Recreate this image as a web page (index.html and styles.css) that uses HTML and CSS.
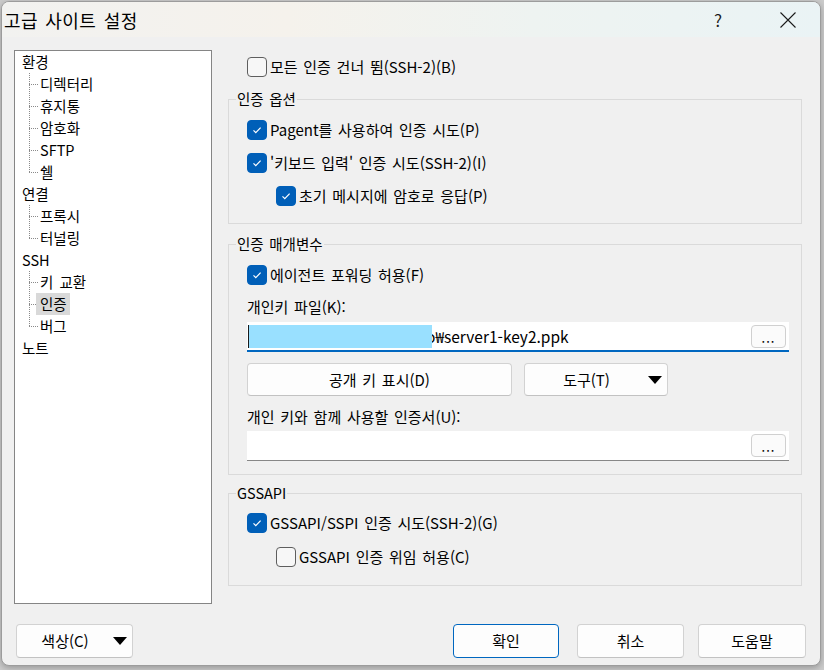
FILE: index.html
```html
<!DOCTYPE html>
<html lang="ko">
<head>
<meta charset="utf-8">
<title>고급 사이트 설정</title>
<link rel="stylesheet" href="styles.css">
</head>
<body>
<div class="window">
  <div class="titlebar">
    <span class="title">고급 사이트 설정</span>
    <span class="help">?</span>
    <span class="close"><svg width="16" height="16" viewBox="0 0 16 16"><path d="M0.5 0.5L15.5 15.5M15.5 0.5L0.5 15.5" stroke="#1b1b1b" stroke-width="1.1" fill="none"/></svg></span>
  </div>
  <div class="main">
    <ul class="tree">
      <li class="node"><span class="node-label">환경</span>
        <ul class="children">
          <li class="child"><span class="label">디렉터리</span></li>
          <li class="child"><span class="label">휴지통</span></li>
          <li class="child"><span class="label">암호화</span></li>
          <li class="child"><span class="label">SFTP</span></li>
          <li class="child"><span class="label">쉘</span></li>
        </ul>
      </li>
      <li class="node"><span class="node-label">연결</span>
        <ul class="children">
          <li class="child"><span class="label">프록시</span></li>
          <li class="child"><span class="label">터널링</span></li>
        </ul>
      </li>
      <li class="node"><span class="node-label">SSH</span>
        <ul class="children">
          <li class="child"><span class="label">키 교환</span></li>
          <li class="child"><span class="label selected">인증</span></li>
          <li class="child"><span class="label">버그</span></li>
        </ul>
      </li>
      <li class="node"><span class="node-label">노트</span></li>
    </ul>

    <div class="panel">
      <label class="check top-check"><span class="box"></span><span>모든 인증 건너 뜀(SSH-2)(B)</span></label>

      <fieldset class="group group-options">
        <legend>인증 옵션</legend>
        <div class="group-body">
          <label class="check"><span class="box on"><svg width="20" height="20" viewBox="0 0 20 20"><polyline points="6.5,10.3 8.8,12.6 13.6,7.6" fill="none" stroke="#fff" stroke-width="1.2"/></svg></span><span>Pagent를 사용하여 인증 시도(P)</span></label>
          <label class="check"><span class="box on"><svg width="20" height="20" viewBox="0 0 20 20"><polyline points="6.5,10.3 8.8,12.6 13.6,7.6" fill="none" stroke="#fff" stroke-width="1.2"/></svg></span><span>'키보드 입력' 인증 시도(SSH-2)(I)</span></label>
          <label class="check indent"><span class="box on"><svg width="20" height="20" viewBox="0 0 20 20"><polyline points="6.5,10.3 8.8,12.6 13.6,7.6" fill="none" stroke="#fff" stroke-width="1.2"/></svg></span><span>초기 메시지에 암호로 응답(P)</span></label>
        </div>
      </fieldset>

      <fieldset class="group group-params">
        <legend>인증 매개변수</legend>
        <div class="group-body">
          <label class="check"><span class="box on"><svg width="20" height="20" viewBox="0 0 20 20"><polyline points="6.5,10.3 8.8,12.6 13.6,7.6" fill="none" stroke="#fff" stroke-width="1.2"/></svg></span><span>에이전트 포워딩 허용(F)</span></label>
          <div class="field-label key-label">개인키 파일(K):</div>
          <div class="input input-focus">
            <span class="sel"></span><span class="input-text">o₩server1-key2.ppk</span>
            <span class="dots">...</span>
          </div>
          <div class="btn-row">
            <div class="btn btn-pub">공개 키 표시(D)</div>
            <div class="btn btn-drop btn-tools"><span class="btn-text">도구(T)</span><svg width="14" height="8" viewBox="0 0 14 8"><polygon points="0,0 14,0 7,8" fill="#000"/></svg></div>
          </div>
          <div class="field-label cert-label">개인 키와 함께 사용할 인증서(U):</div>
          <div class="input input-plain">
            <span class="input-text"></span>
            <span class="dots">...</span>
          </div>
        </div>
      </fieldset>

      <fieldset class="group group-gss">
        <legend>GSSAPI</legend>
        <div class="group-body">
          <label class="check"><span class="box on"><svg width="20" height="20" viewBox="0 0 20 20"><polyline points="6.5,10.3 8.8,12.6 13.6,7.6" fill="none" stroke="#fff" stroke-width="1.2"/></svg></span><span>GSSAPI/SSPI 인증 시도(SSH-2)(G)</span></label>
          <label class="check indent gss-deleg"><span class="box"></span><span>GSSAPI 인증 위임 허용(C)</span></label>
        </div>
      </fieldset>
    </div>
  </div>

  <div class="footer">
    <div class="btn btn-drop btn-color"><span class="btn-text">색상(C)</span><svg width="14" height="8" viewBox="0 0 14 8"><polygon points="0,0 14,0 7,8" fill="#000"/></svg></div>
    <div class="actions">
      <div class="btn btn-ok">확인</div>
      <div class="btn btn-cancel">취소</div>
      <div class="btn btn-helpbtn">도움말</div>
    </div>
  </div>
</div>
</body>
</html>
```
FILE: styles.css
```css
* { box-sizing: border-box; }
html, body { margin: 0; padding: 0; }
body {
  width: 824px;
  height: 670px;
  overflow: hidden;
  background: #cbcbcb;
  font-family: "Noto Sans CJK KR", "Noto Sans", sans-serif;
  font-size: 14px;
  line-height: 20px;
  color: #000;
}

.window {
  margin: 1px 0 0 1px;
  width: 820px;
  height: 665px;
  border: 1px solid #9c9c9c;
  border-radius: 8px;
  background: #f0f0f0;
  overflow: hidden;
  display: flex;
  flex-direction: column;
  box-shadow: 0 2px 6px rgba(0, 0, 0, 0.25);
}

/* title bar */
.titlebar {
  height: 35px;
  flex: none;
  display: flex;
  align-items: center;
  padding-left: 2px;
  background: linear-gradient(90deg, #f2f2f0 0%, #f5f2ec 35%, #eef3f1 65%, #eaf3f5 100%);
}
.title { font-size: 18px; letter-spacing: 0.4px; word-spacing: 2px; }
.help {
  margin-left: auto;
  width: 40px;
  text-align: center;
  font-size: 17px;
  color: #1b1b1b;
}
.close {
  width: 40px;
  margin-left: 30px;
  margin-right: 12px;
  display: flex;
  justify-content: center;
}

/* main area */
.main {
  display: flex;
  padding: 13px 0 0 12px;
}

.tree {
  list-style: none;
  margin: 0;
  padding: 0;
  flex: none;
  width: 198px;
  height: 554px;
  background: #fff;
  border: 1px solid #858585;
  font-size: 14.5px;
  word-spacing: 2px;
}
.node-label {
  display: block;
  height: 22px;
  line-height: 22px;
  padding-left: 7px;
}
.children { list-style: none; margin: 0; padding: 0; }
.child {
  display: flex;
  align-items: center;
  height: 22px;
}
.child::before {
  content: "";
  flex: none;
  width: 10px;
  height: 22px;
  margin-left: 14px;
  background:
    repeating-linear-gradient(to right, #8a8a8a 0 1px, transparent 1px 2px) 0 11px / 10px 1px no-repeat,
    repeating-linear-gradient(to bottom, #8a8a8a 0 1px, transparent 1px 2px) 0 0 / 1px 22px no-repeat;
}
.child:last-child::before {
  background-size: 10px 1px, 1px 11px;
}
.label {
  margin-left: -3px;
  padding: 0 3px 0 4px;
  height: 22px;
  line-height: 22px;
}
.label.selected { background: #d9d9d9; }

/* right panel */
.panel {
  width: 574px;
  margin-left: 16px;
  display: flex;
  flex-direction: column;
  font-size: 15px;
  word-spacing: 1.5px;
}

.check {
  display: flex;
  align-items: center;
  gap: 3px;
  height: 24px;
}
.box {
  flex: none;
  width: 20px;
  height: 20px;
  border: 1px solid #5e5e5e;
  border-radius: 4px;
  background: #f7f7f7;
  display: flex;
}
.box.on {
  border-color: #005fb8;
  background: #005fb8;
}
.box.on svg { margin: -1px; }

.top-check { margin: 5px 0 0 19px; }

.group {
  margin: 10px 0 0 0;
  padding: 0;
  min-width: 0;
  border: 1px solid #dadada;
}
.group legend {
  margin-left: 7px;
  padding: 0 1px;
  line-height: 20px;
  font-size: 14.5px;
}
.group-body {
  display: flex;
  flex-direction: column;
  padding: 9px 12px 15px 18px;
}
.group-options .check + .check { margin-top: 9px; }
.indent { margin-left: 29px; }

.group-params .group-body { padding-bottom: 13px; }
.field-label { height: 20px; line-height: 20px; }
.key-label { margin-top: 10px; }
.cert-label { margin-top: 11px; }

.input {
  display: flex;
  align-items: center;
  height: 30px;
  background: #fff;
  padding-left: 1px;
  padding-right: 3px;
}
.input-focus { margin-top: 5px; border-bottom: 2px solid #0067c0; }
.input-plain { margin-top: 4px; border-bottom: 1px solid #878787; }
.sel {
  position: relative;
  z-index: 1;
  flex: none;
  width: 184px;
  height: 23px;
  background: #99e0ff;
  border-left: 1px solid #1a1a1a;
}
.input-text {
  flex: 1;
  font-size: 15.5px;
  margin-left: -6px;
  white-space: nowrap;
}
.dots {
  flex: none;
  width: 35px;
  height: 23px;
  border: 1px solid #d0d0d0;
  border-radius: 4px;
  background: #fbfbfb;
  text-align: center;
  font-size: 13px;
  line-height: 24px;
  letter-spacing: 1px;
}

.btn-row {
  display: flex;
  gap: 12px;
  margin-top: 11px;
}
.btn {
  height: 34px;
  display: flex;
  align-items: center;
  justify-content: center;
  background: #fdfdfd;
  border: 1px solid #d2d2d2;
  border-bottom-color: #c2c2c2;
  border-radius: 4px;
  font-size: 15px;
}
.btn-row .btn { height: 33px; }
.btn-pub { width: 265px; }
.btn-tools { width: 144px; }
.btn-drop { justify-content: flex-start; padding-right: 5px; }
.btn-drop .btn-text { flex: 1; text-align: center; }
.btn-drop svg { flex: none; }

.group-params { margin-top: 10px; }
.group-gss { margin-top: 8px; }
.group-gss .group-body { padding-top: 8px; padding-bottom: 16px; }
.gss-deleg { margin-top: 10px; }

/* footer */
.footer {
  display: flex;
  padding: 20px 14px 0 14px;
}
.btn-color { width: 117px; }
.actions {
  margin-left: auto;
  display: flex;
}
.btn-ok { width: 106px; border: 1px solid #0067c0; }
.btn-cancel { width: 107px; margin-left: 18px; }
.btn-helpbtn { width: 108px; margin-left: 14px; }
```
